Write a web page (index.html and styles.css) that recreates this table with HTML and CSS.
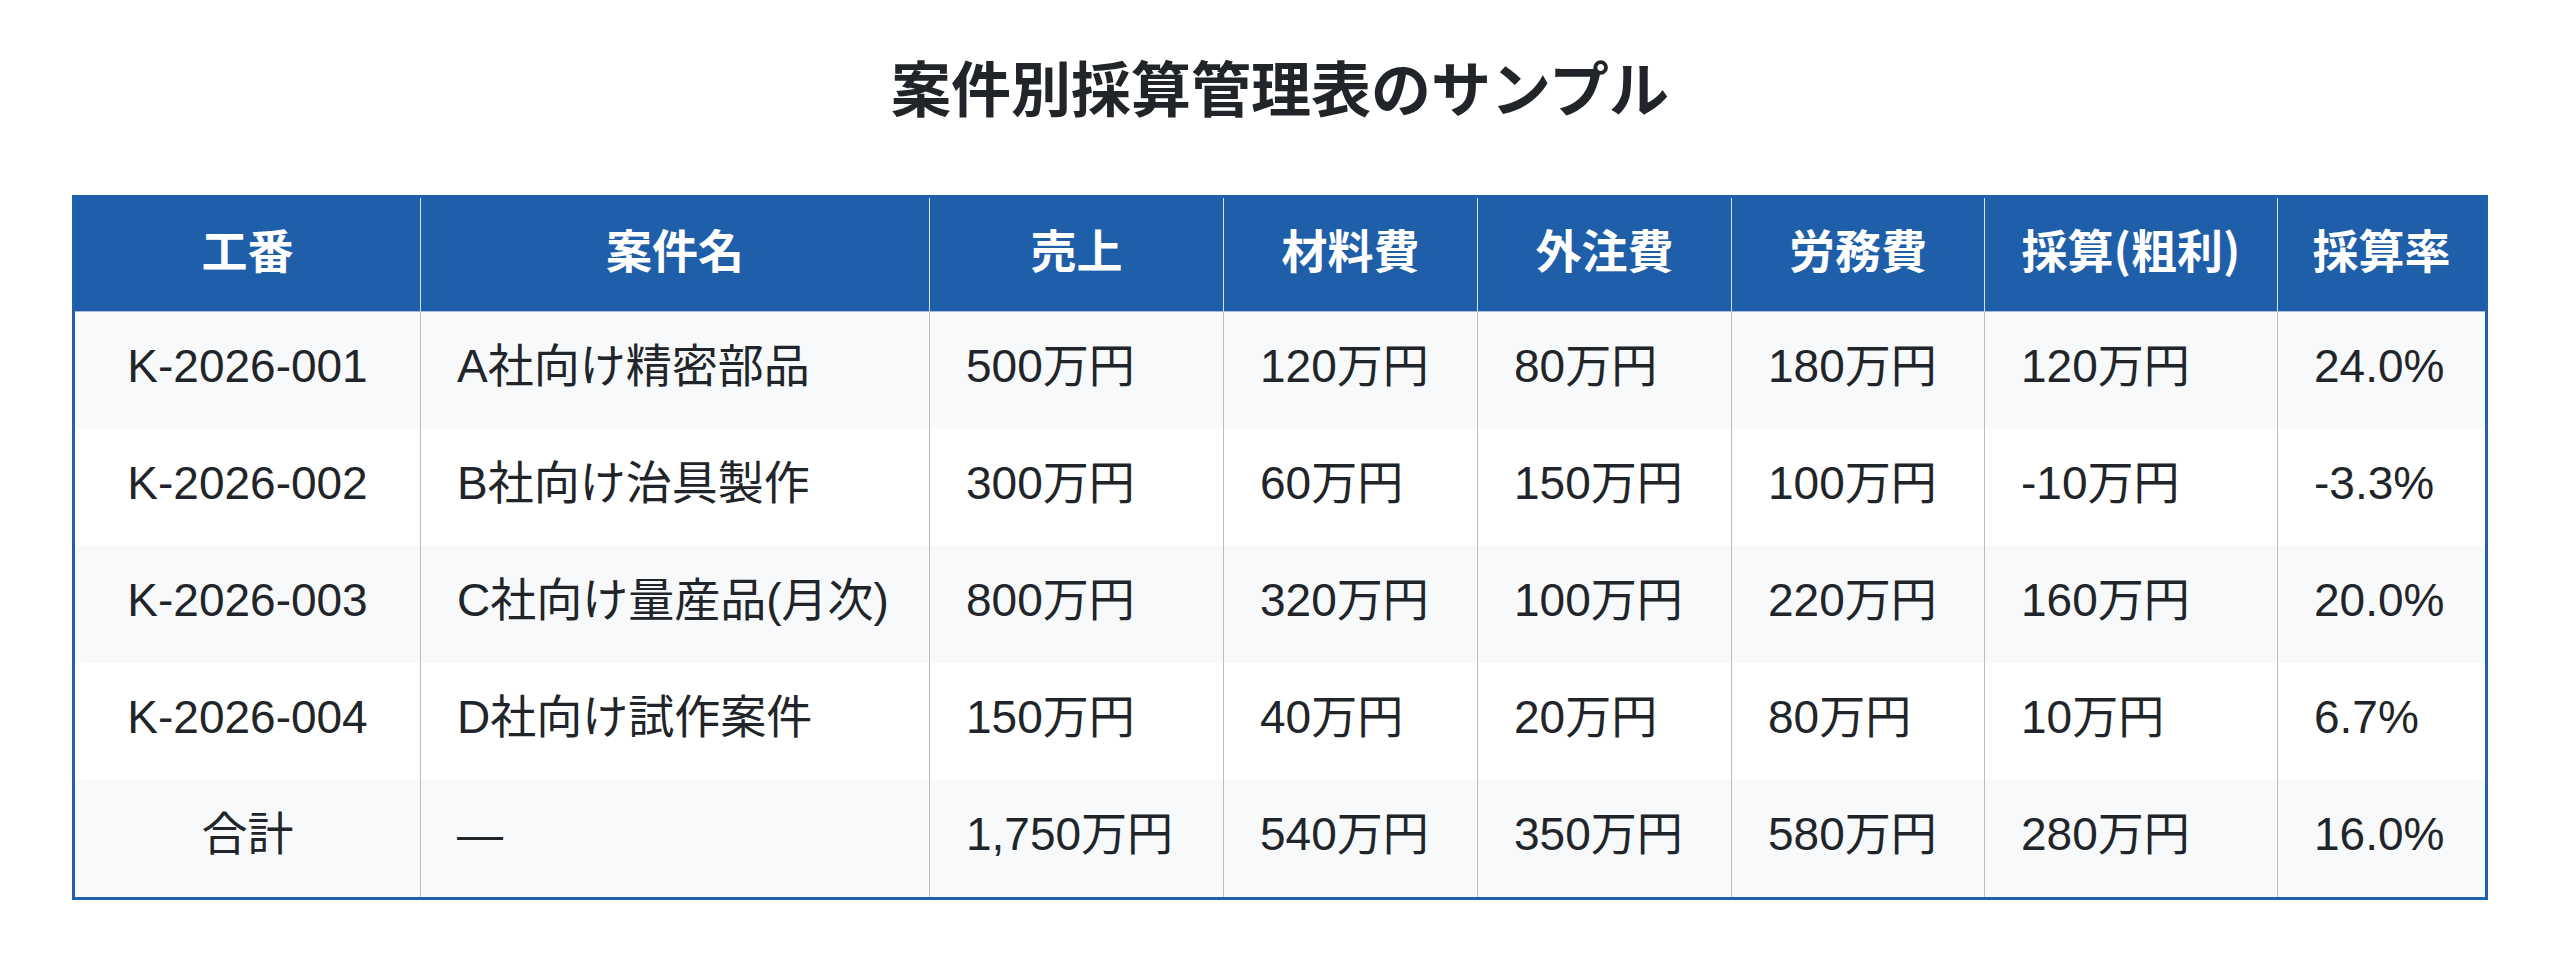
FILE: index.html
```html
<!DOCTYPE html>
<html lang="ja">
<head>
<meta charset="utf-8">
<title>案件別採算管理表のサンプル</title>
<link rel="stylesheet" href="styles.css">
</head>
<body>
<main class="page">
  <h1 class="title">案件別採算管理表のサンプル</h1>
  <table class="sheet">
    <colgroup>
      <col class="c-no">
      <col class="c-name">
      <col class="c-sales">
      <col class="c-mat">
      <col class="c-out">
      <col class="c-lab">
      <col class="c-profit">
      <col class="c-rate">
    </colgroup>
    <thead>
      <tr>
        <th>工番</th>
        <th>案件名</th>
        <th>売上</th>
        <th>材料費</th>
        <th>外注費</th>
        <th>労務費</th>
        <th>採算(粗利)</th>
        <th>採算率</th>
      </tr>
    </thead>
    <tbody>
      <tr>
        <td class="id">K-2026-001</td>
        <td>A社向け精密部品</td>
        <td>500万円</td>
        <td>120万円</td>
        <td>80万円</td>
        <td>180万円</td>
        <td>120万円</td>
        <td>24.0%</td>
      </tr>
      <tr>
        <td class="id">K-2026-002</td>
        <td>B社向け治具製作</td>
        <td>300万円</td>
        <td>60万円</td>
        <td>150万円</td>
        <td>100万円</td>
        <td>-10万円</td>
        <td>-3.3%</td>
      </tr>
      <tr>
        <td class="id">K-2026-003</td>
        <td>C社向け量産品(月次)</td>
        <td>800万円</td>
        <td>320万円</td>
        <td>100万円</td>
        <td>220万円</td>
        <td>160万円</td>
        <td>20.0%</td>
      </tr>
      <tr>
        <td class="id">K-2026-004</td>
        <td>D社向け試作案件</td>
        <td>150万円</td>
        <td>40万円</td>
        <td>20万円</td>
        <td>80万円</td>
        <td>10万円</td>
        <td>6.7%</td>
      </tr>
      <tr class="total">
        <td class="id">合計</td>
        <td>—</td>
        <td>1,750万円</td>
        <td>540万円</td>
        <td>350万円</td>
        <td>580万円</td>
        <td>280万円</td>
        <td>16.0%</td>
      </tr>
    </tbody>
  </table>
</main>
</body>
</html>
```

FILE: styles.css
```css
html, body {
  margin: 0;
  padding: 0;
  background: #ffffff;
}

body {
  font-family: "Noto Sans CJK JP", "Noto Sans", sans-serif;
  color: #212529;
}

.page {
  padding: 41px 72px 0;
}

.title {
  margin: 0 0 64px;
  font-size: 60px;
  line-height: 90px;
  font-weight: 700;
  text-align: center;
  color: #212529;
}

.sheet {
  width: 2416px;
  table-layout: fixed;
  border-collapse: separate;
  border-spacing: 0;
  border: 3px solid #2060ad;
  font-size: 46px;
}

.c-no { width: 345px; }
.c-name { width: 509px; }
.c-sales { width: 294px; }
.c-mat { width: 254px; }
.c-out { width: 254px; }
.c-lab { width: 253px; }
.c-profit { width: 293px; }
.c-rate { width: 208px; }

.sheet th {
  height: 114px;
  box-sizing: border-box;
  padding: 0 8px 12px;
  background: #1f5ea8;
  color: #ffffff;
  font-weight: 700;
  text-align: center;
  vertical-align: middle;
  line-height: 1.5;
  border-left: 1px solid #d9e2ee;
  border-bottom: 1px solid #a9bedb;
  white-space: nowrap;
}

.sheet th:first-child,
.sheet td:first-child {
  border-left: none;
}

.sheet td {
  height: 117px;
  box-sizing: border-box;
  padding: 0 16px 8px 36px;
  text-align: left;
  vertical-align: middle;
  line-height: 1.5;
  font-family: "Liberation Sans", "Noto Sans CJK JP", sans-serif;
  color: #212529;
  border-left: 1px solid #bdbdbd;
  white-space: nowrap;
}

.sheet td.id {
  text-align: center;
  padding: 0 8px 8px;
}

.sheet tbody tr:nth-child(odd) td {
  background: #f8f9fb;
}

.sheet tbody tr:nth-child(even) td {
  background: #ffffff;
}
```
